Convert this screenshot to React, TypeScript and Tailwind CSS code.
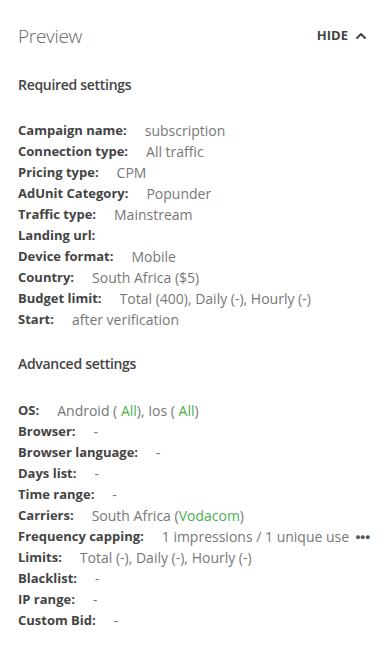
import { ChevronUp } from "lucide-react";

type Row = { label: string; value: React.ReactNode; dots?: boolean };

const Green = ({ children }: { children: React.ReactNode }) => <span className="text-[#4caf50]">{children}</span>;

const required: Row[] = [
  { label: "Campaign name:", value: "subscription" },
  { label: "Connection type:", value: "All traffic" },
  { label: "Pricing type:", value: "CPM" },
  { label: "AdUnit Category:", value: "Popunder" },
  { label: "Traffic type:", value: "Mainstream" },
  { label: "Landing url:", value: "" },
  { label: "Device format:", value: "Mobile" },
  { label: "Country:", value: "South Africa ($5)" },
  { label: "Budget limit:", value: "Total (400), Daily (-), Hourly (-)" },
  { label: "Start:", value: "after verification" },
];

const advanced: Row[] = [
  { label: "OS:", value: <>Android ( <Green>All</Green>), Ios ( <Green>All</Green>)</> },
  { label: "Browser:", value: "-" },
  { label: "Browser language:", value: "-" },
  { label: "Days list:", value: "-" },
  { label: "Time range:", value: "-" },
  { label: "Carriers:", value: <>South Africa (<Green>Vodacom</Green>)</> },
  { label: "Frequency capping:", value: "1 impressions / 1 unique user", dots: true },
  { label: "Limits:", value: "Total (-), Daily (-), Hourly (-)" },
  { label: "Blacklist:", value: "-" },
  { label: "IP range:", value: "-" },
  { label: "Custom Bid:", value: "-" },
];

function Rows({ rows }: { rows: Row[] }) {
  return (
    <div className="flex flex-col">
      {rows.map((r) => (
        <div key={r.label} className="flex items-center h-[21px] text-[13px] w-[352px]">
          <span className="font-bold text-[#444] whitespace-nowrap shrink-0">{r.label}</span>
          <span className="ml-[18px] text-[14px] text-[#777] whitespace-nowrap overflow-hidden min-w-0">{r.value}</span>
          {r.dots && <span className="ml-[6px] text-[#555] text-[9px] tracking-[-0.5px] shrink-0">●●●</span>}
        </div>
      ))}
    </div>
  );
}

export default function App() {
  return (
    <div className="w-[392px] h-[655px] bg-white px-[18px]" style={{ fontFamily: "'Open Sans', sans-serif" }}>
      <div className="flex items-center justify-between pt-[22px] h-[50px]">
        <span className="text-[19px] font-light text-[#666] tracking-[-0.3px]">Preview</span>
        <button className="flex items-center gap-[5px] text-[13px] font-bold text-[#444] mr-[5px]">
          HIDE <ChevronUp size={16} strokeWidth={3} />
        </button>
      </div>
      <div className="mt-[24px] text-[14px] font-semibold text-[#444] tracking-[-0.3px]">Required settings</div>
      <div className="mt-[25px]">
        <Rows rows={required} />
      </div>
      <div className="mt-[23px] text-[14px] font-semibold text-[#444] tracking-[-0.3px]">Advanced settings</div>
      <div className="mt-[26px]">
        <Rows rows={advanced} />
      </div>
    </div>
  );
}
